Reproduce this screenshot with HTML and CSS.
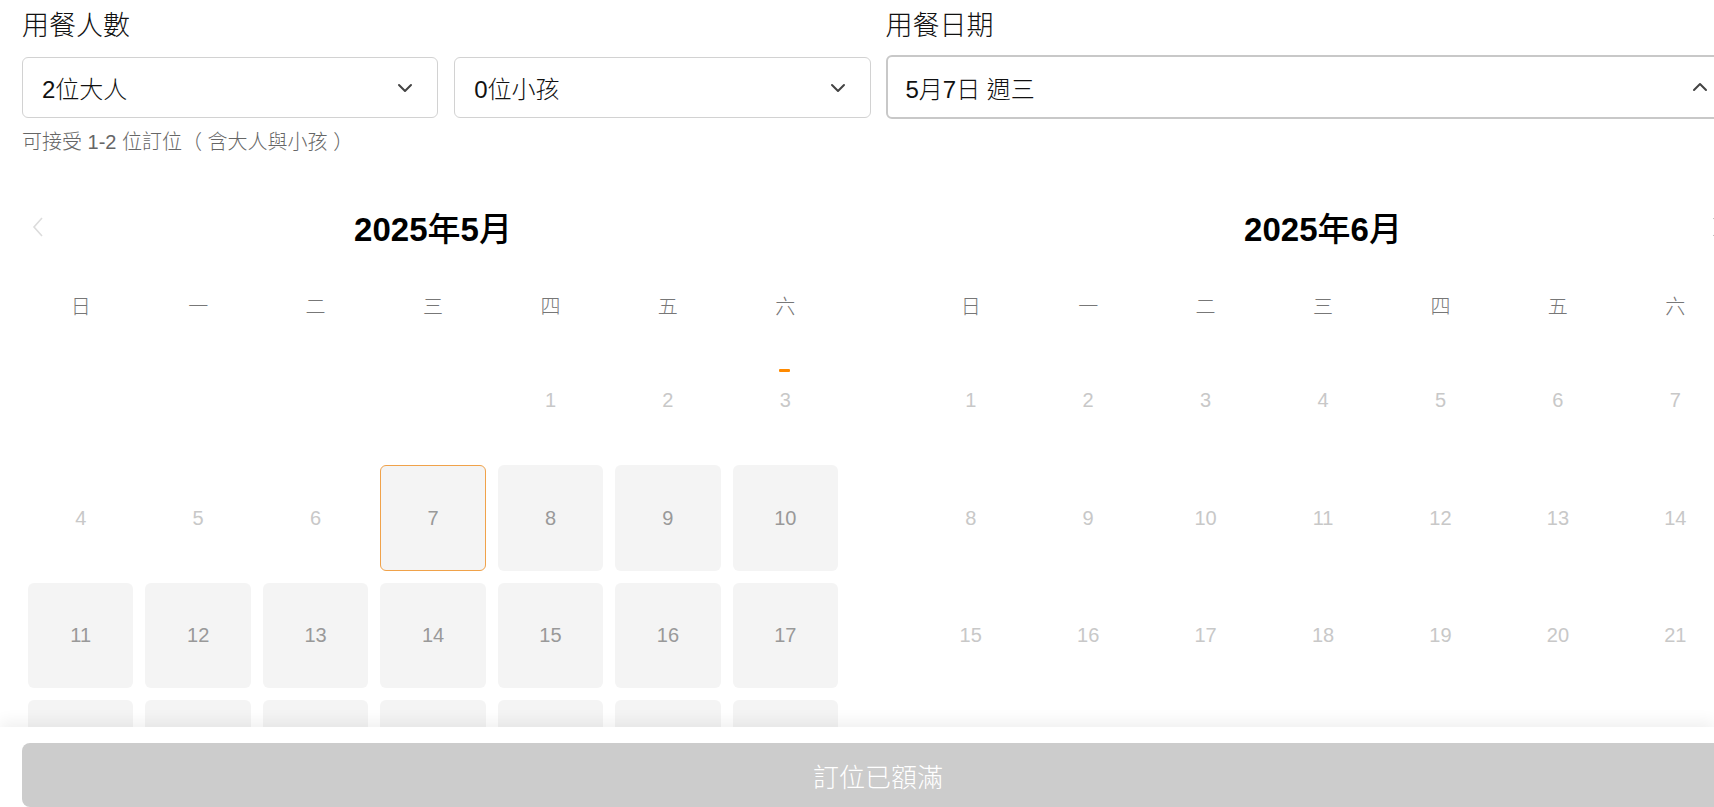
FILE: index.html
```html
<!DOCTYPE html>
<html lang="zh-Hant">
<head>
    <meta charset="UTF-8">
    <meta name="viewport" content="width=device-width, initial-scale=1.0">
    <title>訂位</title>
    <link rel="stylesheet" href="styles.css">
</head>
<body>
    <div class="page">
        <div class="fields">
            <div class="field">
                <div class="fieldLabel">用餐人數</div>
                <div class="selects">
                    <div class="select">
                        <span>2位大人</span>
                        <svg class="chev" width="16" height="10" viewBox="0 0 16 10"><path d="M2 2 L8 8 L14 2" fill="none" stroke="#444" stroke-width="2" stroke-linecap="round" stroke-linejoin="round"/></svg>
                    </div>
                    <div class="select">
                        <span>0位小孩</span>
                        <svg class="chev" width="16" height="10" viewBox="0 0 16 10"><path d="M2 2 L8 8 L14 2" fill="none" stroke="#444" stroke-width="2" stroke-linecap="round" stroke-linejoin="round"/></svg>
                    </div>
                </div>
                <div class="hint">可接受 1-2 位訂位（ 含大人與小孩 ）</div>
            </div>
            <div class="field">
                <div class="fieldLabel">用餐日期</div>
                <div class="select open">
                    <span>5月7日 週三</span>
                    <svg class="chev" width="16" height="10" viewBox="0 0 16 10"><path d="M2 8 L8 2 L14 8" fill="none" stroke="#444" stroke-width="2" stroke-linecap="round" stroke-linejoin="round"/></svg>
                </div>
            </div>
        </div>

        <div class="months">
            <!-- 5월 -->
            <div class="month">
                <div class="monthHead">
                    <svg class="arrow" width="12" height="22" viewBox="0 0 12 22"><path d="M10 2 L2 11 L10 20" fill="none" stroke="#dcdcdc" stroke-width="1.6"/></svg>
                    <div class="monthTitle">2025<span class="cjk">年</span>5<span class="cjk">月</span></div>
                    <span class="arrow"></span>
                </div>
                <div class="weekdays">
                    <div>日</div><div>一</div><div>二</div><div>三</div><div>四</div><div>五</div><div>六</div>
                </div>
                <div class="days">
                    <div class="day"></div><div class="day"></div><div class="day"></div><div class="day"></div>
                    <div class="day off">1</div><div class="day off">2</div><div class="day off today">3</div>
                    <div class="day off">4</div><div class="day off">5</div><div class="day off">6</div>
                    <div class="day full picked">7</div><div class="day full">8</div><div class="day full">9</div><div class="day full">10</div>
                    <div class="day full">11</div><div class="day full">12</div><div class="day full">13</div><div class="day full">14</div>
                    <div class="day full">15</div><div class="day full">16</div><div class="day full">17</div>
                    <div class="day full">18</div><div class="day full">19</div><div class="day full">20</div><div class="day full">21</div>
                    <div class="day full">22</div><div class="day full">23</div><div class="day full">24</div>
                    <div class="day full">25</div><div class="day full">26</div><div class="day full">27</div><div class="day full">28</div>
                    <div class="day full">29</div><div class="day full">30</div><div class="day full">31</div>
                </div>
            </div>
            <!-- 6월 -->
            <div class="month">
                <div class="monthHead">
                    <span class="arrow"></span>
                    <div class="monthTitle">2025<span class="cjk">年</span>6<span class="cjk">月</span></div>
                    <svg class="arrow" width="12" height="22" viewBox="0 0 12 22"><path d="M2 2 L10 11 L2 20" fill="none" stroke="#555" stroke-width="1.6"/></svg>
                </div>
                <div class="weekdays">
                    <div>日</div><div>一</div><div>二</div><div>三</div><div>四</div><div>五</div><div>六</div>
                </div>
                <div class="days">
                    <div class="day off">1</div><div class="day off">2</div><div class="day off">3</div><div class="day off">4</div>
                    <div class="day off">5</div><div class="day off">6</div><div class="day off">7</div>
                    <div class="day off">8</div><div class="day off">9</div><div class="day off">10</div><div class="day off">11</div>
                    <div class="day off">12</div><div class="day off">13</div><div class="day off">14</div>
                    <div class="day off">15</div><div class="day off">16</div><div class="day off">17</div><div class="day off">18</div>
                    <div class="day off">19</div><div class="day off">20</div><div class="day off">21</div>
                    <div class="day off">22</div><div class="day off">23</div><div class="day off">24</div><div class="day off">25</div>
                    <div class="day off">26</div><div class="day off">27</div><div class="day off">28</div>
                    <div class="day off">29</div><div class="day off">30</div>
                </div>
            </div>
        </div>
    </div>

    <div class="footer">
        <button class="bookBtn" disabled>訂位已額滿</button>
    </div>
</body>
</html>
```

FILE: styles.css
```css
html, body {
    margin: 0;
    overflow: hidden; /* 화면 밖으로 넘치는 부분은 잘라냄 */
}
body {
    font-family: "Liberation Sans", "Noto Sans CJK TC", sans-serif;
    color: #111;
    background-color: #fff;
}
.page {
    width: 1712px;
    margin-left: 22px;
    padding-top: 8px;
}
.fields {
    display: flex;
    gap: 15px;
}
.field {
    flex: 1;
}
.fieldLabel {
    font-size: 27px;
    font-weight: 300;
    line-height: 36px;
    margin-bottom: 13px;
}
.selects {
    display: flex;
    gap: 16px;
}
.select {
    flex: 1;
    height: 61px;
    box-sizing: border-box;
    border: 1px solid #d2d2d2;
    border-radius: 6px;
    display: flex;
    align-items: center;
    justify-content: space-between;
    padding: 0 24px 0 19px;
    font-size: 24px;
    font-weight: 300;
}
.select.open {
    height: 64px;
    margin-top: -2px;
    border: 2px solid #c8c8c8; /* 열린 상태 */
    padding-left: 18px;
}
.chev {
    flex-shrink: 0;
}
.hint {
    margin-top: 10px;
    font-size: 20px;
    font-weight: 300;
    line-height: 28px;
    color: #666;
}
.months {
    display: flex;
    gap: 68px;
    margin-top: 47px;
}
.month {
    flex: 1;
}
.monthHead {
    height: 48px;
    display: flex;
    align-items: center;
    justify-content: space-between;
    padding: 0 10px;
}
.arrow {
    width: 12px;
    height: 22px;
}
.monthTitle {
    font-size: 33px;
    font-weight: bold;
    color: #000;
}
.monthTitle .cjk {
    font-weight: 500;
}
.weekdays, .days {
    display: grid;
    grid-template-columns: repeat(7, 1fr);
    gap: 12px;
    padding: 0 6px;
}
.weekdays {
    margin-top: 36px;
    height: 40px;
    line-height: 40px;
    text-align: center;
    font-size: 20px;
    font-weight: 300;
    color: #777;
}
.days {
    margin-top: 21px;
}
.day {
    aspect-ratio: 1;
    display: flex;
    align-items: center;
    justify-content: center;
    font-size: 20px;
    border-radius: 6px;
    box-sizing: border-box;
    position: relative;
}
.day.off {
    color: #c8c8c8;
}
.day.full {
    background-color: #f4f4f4;
    color: #999;
}
.day.picked {
    border: 1px solid #f0a24a; /* 선택된 날짜 */
}
.day.today::before {
    content: "";
    position: absolute;
    top: 21px;
    left: 50%;
    width: 11px;
    height: 3px;
    margin-left: -6px;
    background-color: #ff8a00;
    border-radius: 1px;
}
.footer {
    position: fixed;
    left: 0;
    right: 0;
    bottom: 0;
    height: 80px;
    box-sizing: border-box;
    padding: 16px 0 0 22px;
    background-color: #fff;
    box-shadow: 0 -6px 14px rgba(0, 0, 0, 0.06);
}
.bookBtn {
    width: 1712px;
    height: 64px;
    border: none;
    border-radius: 8px;
    background-color: #cccccc;
    color: #fff;
    font-family: "Liberation Sans", "Noto Sans CJK TC", sans-serif;
    font-size: 26px;
    font-weight: 300;
}
```
